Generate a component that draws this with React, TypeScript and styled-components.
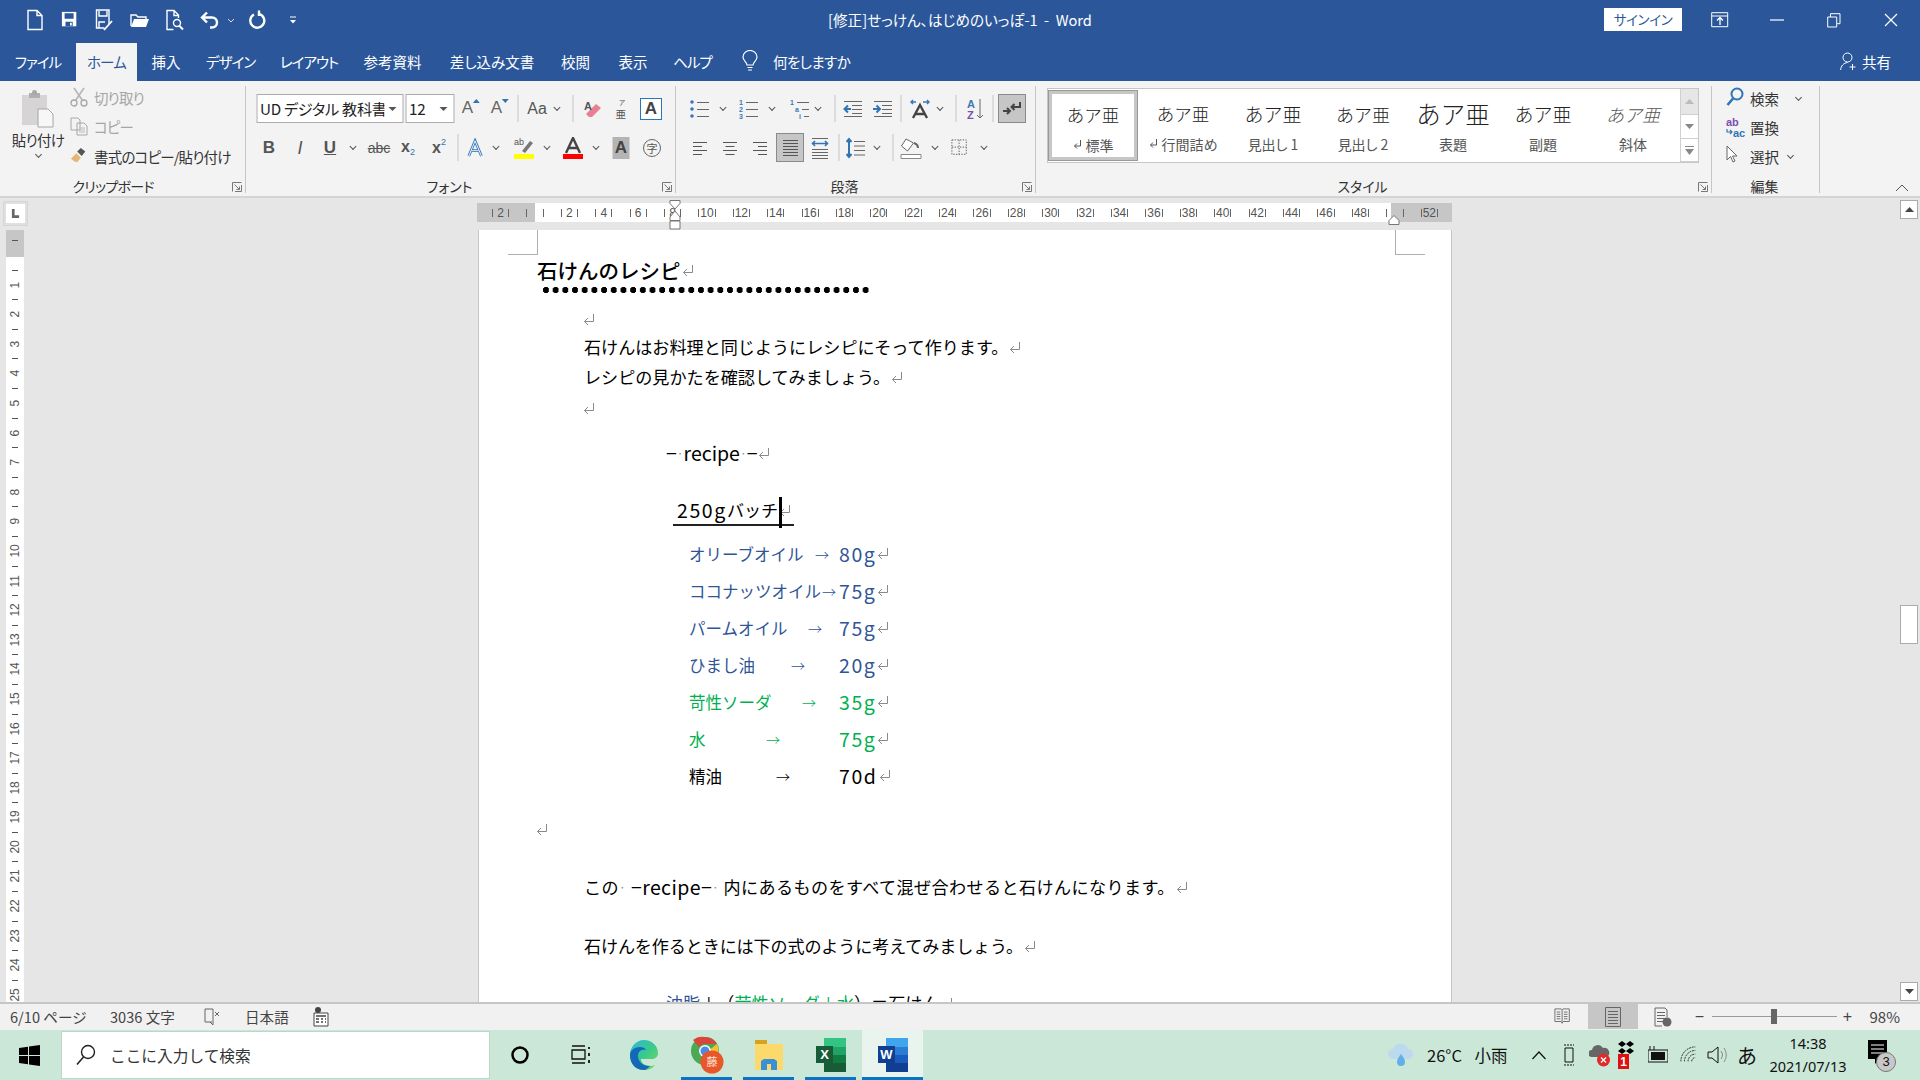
import React from "react";
import styled, { createGlobalStyle } from "styled-components";

const Global = createGlobalStyle`
  html, body { margin: 0; padding: 0; width: 1920px; height: 1080px; overflow: hidden; background: #e6e6e6; }
  * { box-sizing: border-box; }
  body { font-family: "Noto Sans CJK JP", "Noto Sans", sans-serif; color: #222; }
  svg { display: block; }
`;

const Shell = styled.div`width:1920px;height:1080px;display:flex;flex-direction:column;overflow:hidden;font-feature-settings:"palt";`;

/* slot rows: every command sits on a known centre line */
const SlotBox = styled.div<{ $left: number; $h?: number }>`
  display:flex;align-items:center;height:${p => p.$h ?? 29}px;padding-left:${p => p.$left}px;
`;
const Slot = styled.div<{ $w: number }>`
  flex:0 0 ${p => p.$w}px;width:${p => p.$w}px;display:flex;align-items:center;height:100%;white-space:nowrap;
  & > * { flex:none; transform:translateX(-50%); }
`;
type Item = [number, React.ReactNode];
const SlotRow = ({ origin, items, h }: { origin: number; items: Item[]; h?: number }) => (
  <SlotBox $left={items[0][0] - origin} $h={h}>
    {items.map(([c, n], i) => (
      <Slot key={i} $w={i + 1 < items.length ? items[i + 1][0] - c : 0}>{n}</Slot>
    ))}
  </SlotBox>
);

/* title bar */
const TitleBar = styled.header`height:40px;background:#2b579a;color:#fff;display:grid;grid-template-columns:1fr auto 1fr;align-items:center;`;
const TitleText = styled.div`font-size:14.6px;letter-spacing:0;white-space:pre;padding-bottom:2px;`;
const WinControls = styled.div`display:flex;justify-content:flex-end;align-items:center;height:100%;`;
const SignIn = styled.button`width:78px;height:23px;margin:0 38px 2px 0;border:0;background:#fff;color:#2b579a;font:inherit;font-size:13.5px;letter-spacing:-.4px;padding:0;`;

/* tabs */
const TabBar = styled.nav`height:41px;padding-top:3px;background:#2b579a;display:flex;color:#fff;font-size:14.5px;`;
const Tab = styled.div<{ $w: number; $on?: boolean; $ls?: number }>`
  flex:0 0 ${p => p.$w}px;display:flex;align-items:center;justify-content:center;white-space:nowrap;padding-bottom:2px;letter-spacing:${p => p.$ls ?? 0}px;
  background:${p => (p.$on ? "#f3f3f3" : "transparent")};color:${p => (p.$on ? "#2b579a" : "#fff")};
`;
const TellMe = styled.div`display:flex;align-items:center;margin-left:23px;gap:15px;padding-bottom:2px;letter-spacing:-.6px;`;
const Share = styled.div`margin-left:auto;padding-right:29px;display:flex;align-items:center;gap:5px;padding-bottom:2px;`;

/* ribbon */
const Ribbon = styled.section`height:117px;background:#f3f3f3;border-bottom:2px solid #d4d4d4;padding-top:5px;display:flex;align-items:flex-start;position:relative;`;
const Group = styled.div<{ $w: number }>`
  flex:0 0 ${p => p.$w}px;height:107px;border-right:1px solid #c6c6c6;display:flex;flex-direction:column;position:relative;
`;
const Rows = styled.div`padding-top:8px;display:flex;flex-direction:column;gap:10px;`;
const GroupLabel = styled.div<{ $pr?: number; $ls?: number }>`
  margin-top:auto;height:14px;line-height:14px;font-size:14px;text-align:center;color:#333;padding-right:${p => p.$pr ?? 22}px;letter-spacing:${p => p.$ls ?? 0}px;
`;
const LauncherMark = styled.div`position:absolute;right:3px;bottom:1px;`;
const Launcher = () => (
  <LauncherMark><svg width="10" height="10" viewBox="0 0 10 10"><path d="M.5 9.500V.5h9M2.500 2.500l5 5M4.500 7.500h3v-3M9.500 3v6.500H3" stroke="#777" fill="none" /></svg></LauncherMark>
);
const Sep = styled.span`width:1px;height:27px;background:#c6c6c6;`;
const Caret = styled.span`width:7px;height:4px;display:block;border-left:0;position:relative;
  &::before{content:"";position:absolute;left:1px;top:-2px;width:4px;height:4px;border-right:1px solid #555;border-bottom:1px solid #555;transform:rotate(45deg);}
`;
const FontBox = styled.div<{ $w: number }>`
  width:${p => p.$w}px;height:29px;background:#fff;border:1px solid #ababab;font-size:15.2px;letter-spacing:-.3px;line-height:27px;padding-left:3px;overflow:hidden;white-space:nowrap;position:relative;color:#222;
  &::after{content:"";position:absolute;right:6px;top:12px;border:4px solid transparent;border-top:4px solid #555;border-bottom:0;}
`;
const FontClip = styled.span`display:block;width:124px;overflow:hidden;`;
const Letter = styled.span<{ $s?: number; $c?: string; $b?: boolean; $i?: boolean; $u?: boolean; $strike?: boolean }>`
  font-family:"Liberation Sans",sans-serif;font-size:${p => p.$s ?? 16}px;color:${p => p.$c ?? "#555"};
  font-weight:${p => (p.$b ? 700 : 400)};font-style:${p => (p.$i ? "italic" : "normal")};
  text-decoration:${p => (p.$u ? "underline" : p.$strike ? "line-through" : "none")};line-height:1;
`;
const Sub = styled.sub`font-size:9px;color:#2f75b5;font-weight:400;vertical-align:-3px;`;
const Sup = styled.sup`font-size:9px;color:#2f75b5;font-weight:400;vertical-align:8px;line-height:0;`;
const Boxed = styled.span`display:block;width:22px;height:22px;border:1px solid #2f75b5;background:#fff;text-align:center;font:700 17px/20px "Liberation Sans",sans-serif;color:#444;`;
const Shaded = styled.span`display:block;width:17px;height:22px;background:#b4b4b4;text-align:center;font:700 17px/22px "Liberation Sans",sans-serif;color:#444;`;
const Ringed = styled.span`display:block;width:18px;height:18px;border:1px solid #666;border-radius:50%;text-align:center;font-size:11px;line-height:16px;color:#555;`;
const ToggleOn = styled.span`display:flex;width:28px;height:29px;align-items:center;justify-content:center;background:#c6c6c6;border:1px solid #8a8a8a;`;
const GrowRow = styled.span`display:flex;align-items:flex-start;gap:0;margin-top:-2px;`;

/* clipboard */
const ClipLayout = styled.div`display:flex;height:86px;`;
const PasteCol = styled.div`flex:0 0 76px;display:flex;flex-direction:column;align-items:center;padding-top:4px;font-size:14.5px;`;
const PasteText = styled.div`margin-top:2px;line-height:20px;color:#333;letter-spacing:-.7px;`;
const PasteCaret = styled.div`height:12px;display:flex;align-items:center;`;
const ClipStack = styled.div`display:flex;flex-direction:column;margin-top:-3px;margin-left:-6px;`;
const ClipRow = styled.div<{ $off?: boolean }>`
  height:28px;display:flex;align-items:center;gap:6px;font-size:14.5px;letter-spacing:-.8px;color:${p => (p.$off ? "#a6a6a6" : "#333")};white-space:nowrap;
  &:nth-child(2){margin-top:1px;}
  &:nth-child(3){margin-top:2px;}
`;
const ClipIcon = styled.span`flex:0 0 18px;display:flex;justify-content:center;`;

/* gallery */
const Gallery = styled.div`margin:2px 0 0 11px;width:652px;height:75px;border:1px solid #c6c6c6;background:#fff;display:flex;`;
const StyleItem = styled.div<{ $on?: boolean }>`
  flex:0 0 90px;height:${p => (p.$on ? "71px" : "73px")};margin-top:${p => (p.$on ? "1px" : "0")};border:${p => (p.$on ? "4px solid #c6c6c6" : "4px solid transparent")};${p => p.$on && "outline:1px solid #999;outline-offset:-1px;"}
  display:flex;flex-direction:column;align-items:center;background:#fff;
`;
const StyleSample = styled.div<{ $s: number; $i?: boolean; $c?: string }>`
  height:41px;line-height:42px;font-size:${p => p.$s}px;font-weight:300;white-space:nowrap;color:${p => p.$c ?? "#222"};font-style:${p => (p.$i ? "italic" : "normal")};font-feature-settings:normal;
`;
const StyleName = styled.div`font-size:14px;line-height:20px;color:#555;white-space:nowrap;display:flex;align-items:center;gap:4px;`;
const GalleryScroll = styled.div`margin-left:2px;flex:0 0 18px;display:flex;flex-direction:column;border-left:1px solid #d0d0d0;`;
const GalleryBtn = styled.div<{ $h: number; $off?: boolean }>`
  height:${p => p.$h}px;background:${p => (p.$off ? "#e6e6e6" : "#fff")};border-bottom:1px solid #d0d0d0;display:flex;align-items:center;justify-content:center;
`;
const EditStack = styled.div`padding:0 0 0 38px;display:flex;flex-direction:column;font-size:14.5px;color:#333;margin-top:-2px;`;
const EditRow = styled.div<{ $gap?: number }>`height:29px;display:flex;align-items:center;gap:${p => p.$gap ?? 8}px;white-space:nowrap;position:relative;`;
const EditIcon = styled.span`position:absolute;left:-24px;top:3px;`;
const Collapse = styled.div`position:absolute;right:11px;bottom:4px;`;

/* workspace */
const Workspace = styled.main`flex:1;min-height:0;display:flex;background:#e6e6e6;`;
const VCol = styled.aside`flex:0 0 52px;display:flex;flex-direction:column;padding-top:4px;`;
const TabStop = styled.div`width:23px;height:23px;margin-left:4px;background:#fff;border:2px solid #e0e0e0;outline:1px solid #d6d6d6;display:flex;align-items:center;justify-content:center;`;
const VRuler = styled.div`margin:5px 0 0 6px;width:18px;flex:1;min-height:0;overflow:hidden;background:#fff;display:flex;flex-direction:column;`;
const VGray = styled.div`flex:0 0 27px;background:#c6c6c6;display:flex;justify-content:center;padding-top:10px;`;
const VDash = styled.i`display:block;width:6px;height:1px;background:#555;`;
const VHead = styled.div`flex:0 0 13.6px;display:flex;align-items:flex-end;justify-content:center;`;
const VCell = styled.div`flex:0 0 29.6px;display:flex;flex-direction:column;align-items:center;`;
const VNum = styled.span`flex:1;writing-mode:vertical-rl;transform:rotate(180deg);font:12px/18px "Liberation Sans",sans-serif;color:#555;display:flex;align-items:center;justify-content:center;`;
const Center = styled.div`flex:1;min-width:0;display:flex;flex-direction:column;padding:5px 0 0 425px;`;
const HRuler = styled.div`flex:0 0 19px;width:975px;display:flex;position:relative;font:12px/1 "Liberation Sans",sans-serif;color:#555;`;
const HGrayL = styled.div`flex:0 0 58px;background:#c6c6c6;display:flex;align-items:center;padding-left:6.4px;`;
const HWhite = styled.div`flex:0 0 856px;background:#fff;display:flex;align-items:center;overflow:hidden;`;
const HGrayR = styled.div`flex:0 0 61px;background:#c6c6c6;display:flex;align-items:center;padding-left:4px;`;
const HUnit = styled.div`flex:0 0 34.4px;display:flex;justify-content:center;`;
const HNum = styled.div`flex:0 0 17.2px;width:17.2px;height:8px;border-left:1px solid #666;border-right:1px solid #666;display:flex;align-items:center;justify-content:center;overflow:visible;white-space:nowrap;`;
const HTick = styled.div`flex:0 0 17.2px;display:flex;justify-content:center;&::before{content:"";width:1px;height:8px;background:#666;}`;
const Indent = styled.div<{ $x: number; $y: number }>`position:absolute;left:${p => p.$x}px;top:${p => p.$y}px;`;
const PageArea = styled.div`flex:1;min-height:0;margin:8px 0 0 1px;width:974px;background:#fff;border-left:1px solid #c6c6c6;border-right:1px solid #c6c6c6;padding-left:58px;position:relative;overflow:hidden;`;
const CropMark = styled.div<{ $right?: boolean }>`
  position:absolute;top:0;${p => (p.$right ? "left:916px;border-left:1px solid #b0b0b0;" : "left:29px;border-right:1px solid #b0b0b0;")}width:30px;height:25px;border-bottom:1px solid #b0b0b0;
`;
const Heading = styled.div`margin-top:22px;height:36px;line-height:36px;font-size:20.5px;font-weight:500;color:#000;display:flex;align-items:center;white-space:pre;font-feature-settings:normal;`;
const Dots = styled.div`margin:-1px 0 12px 6px;width:329px;height:6px;background:radial-gradient(circle at 3px 3px,#000 2.9px,transparent 3.1px) 0 0/9.7px 6px repeat-x;`;
const Line = styled.div<{ $ml?: number; $mt?: number; $h?: number; $ls?: number }>`
  margin-left:${p => p.$ml ?? 47}px;margin-top:${p => p.$mt ?? 0}px;height:${p => p.$h ?? 30}px;line-height:${p => p.$h ?? 30}px;
  font-size:17.1px;color:#000;display:flex;align-items:center;white-space:pre;font-feature-settings:normal;letter-spacing:${p => p.$ls ?? 0}px;
`;
const Lat = styled.span`font-size:19.5px;`;
const Num = styled.span`font-size:19.5px;letter-spacing:1.6px;`;
const Dot = styled.span`color:#888;font-size:12px;`;
const BatchBox = styled.div`display:flex;align-items:center;width:121px;height:30px;padding-left:4px;border-bottom:2px solid #222;position:relative;`;
const Cursor = styled.span`position:absolute;left:106px;top:1px;width:3px;height:31px;background:#000;`;
const Ingredient = styled.div<{ $c: string; $mt?: number }>`
  margin:${p => p.$mt ?? 0}px 0 0 152px;height:37px;display:flex;align-items:center;font-size:16.5px;color:${p => p.$c};white-space:pre;font-feature-settings:normal;
`;
const IngName = styled.span<{ $w: number }>`flex:0 0 ${p => p.$w}px;min-width:0;`;
const IngArrow = styled.span<{ $w: number }>`flex:0 0 ${p => p.$w}px;min-width:0;font-size:14px;font-weight:300;`;
const Blue = styled.span`color:#2f5597;`;
const Green = styled.span`color:#00b050;`;
const Rm = styled.svg`flex:none;margin-left:1px;`;
const Ret = () => (
  <Rm width="12" height="13" viewBox="0 0 12 13"><path d="M10.500 1v7.500H1.500M5 5 1.500 8.500 5 12" fill="none" stroke="#8a8a8a" /></Rm>
);
const Scroll = styled.div`flex:0 0 20px;padding-top:2px;display:flex;flex-direction:column;`;
const ScrollBtn = styled.div`width:18px;height:19px;background:#fff;border:1px solid #ababab;display:flex;align-items:center;justify-content:center;`;
const Thumb = styled.div`width:18px;height:39px;margin-top:386px;background:#fff;border:1px solid #ababab;`;
const ScrollEnd = styled(ScrollBtn)`margin-top:auto;margin-bottom:1px;`;

/* status */
const Status = styled.footer`flex:0 0 27px;background:#f1f1f1;border-top:2px solid #c6c6c6;display:flex;align-items:center;font-size:14.6px;color:#444;font-feature-settings:normal;padding-bottom:1px;`;
const StatusCell = styled.div<{ $w: number; $pl?: number }>`flex:0 0 ${p => p.$w}px;padding-left:${p => p.$pl ?? 0}px;white-space:nowrap;display:flex;align-items:center;`;
const ViewBtn = styled.div<{ $on?: boolean }>`flex:0 0 50px;height:25px;background:${p => (p.$on ? "#c6c6c6" : "transparent")};display:flex;align-items:center;justify-content:center;`;
const Right = styled.div`margin-left:auto;display:flex;align-items:center;height:100%;`;
const Zoom = styled.div<{ $w: number }>`flex:0 0 ${p => p.$w}px;text-align:center;font:16px/1 "Liberation Sans",sans-serif;color:#444;`;
const Slider = styled.div`flex:0 0 125px;height:1px;background:#999;position:relative;`;
const SliderThumb = styled.div`position:absolute;left:59px;top:-7px;width:6px;height:15px;background:#666;`;
const Percent = styled.div`margin-left:11px;padding-right:20px;font-size:15px;`;

/* taskbar */
const Taskbar = styled.div`flex:0 0 50px;background:#cbe7d8;display:flex;align-items:stretch;color:#111;`;
const StartBtn = styled.div`flex:0 0 61px;display:flex;align-items:center;justify-content:center;padding-right:3px;`;
const Search = styled.div`flex:0 0 429px;margin:1px 0;background:#fff;border:1px solid #bcd7c8;display:flex;align-items:center;padding-left:14px;gap:14px;font-size:15.7px;color:#333;font-feature-settings:normal;`;
const TaskCell = styled.div<{ $w: number; $on?: boolean; $open?: boolean }>`
  flex:0 0 ${p => p.$w}px;display:flex;align-items:center;justify-content:center;position:relative;
  background:${p => (p.$on ? "#e9f4ee" : "transparent")};
  ${p => p.$open && `&::after{content:"";position:absolute;bottom:0;height:3px;background:#0a74c4;left:${p.$on ? 0 : 5}px;right:${p.$on ? 0 : 6}px;}`}
`;
const Tray = styled.div`flex:1;display:flex;align-items:center;`;
const TrayText = styled.span`font-size:16.5px;font-feature-settings:normal;color:#111;`;
const Ime = styled.span`font-size:20px;color:#111;font-feature-settings:normal;`;
const Clock = styled.div`display:flex;flex-direction:column;align-items:center;font:14.5px/23px "Noto Sans",sans-serif;color:#111;`;
const Notif = styled.div`position:relative;width:24px;height:30px;`;
const NotifBadge = styled.span`position:absolute;left:8px;top:12px;width:20px;height:20px;border-radius:50%;background:#c8c8c8;border:1px solid #777;font:13px/18px "Liberation Sans",sans-serif;text-align:center;color:#111;`;

/* ---- icons ---- */
const S = ({ w = 20, h = 20, vb = "0 0 20 20", children }: { w?: number; h?: number; vb?: string; children: React.ReactNode }) => (
  <svg width={w} height={h} viewBox={vb}>{children}</svg>
);
const qatP = { fill: "none", stroke: "#fff", strokeWidth: 1.4 };
const QNew = () => <S w={17} h={22} vb="0 0 17 22"><path {...qatP} d="M1.500 1.500h9l5 5v14h-14zM10.500 1.500v5h5" /></S>;
const QSave = () => <S w={18} h={18}><path fill="#fff" d="M1 1h16v16H1z" /><path fill="#2b579a" d="M4 2.500h10v6H4zM5 12h8v5H5z" /><path fill="#fff" d="M10 13h2v3h-2z" /></S>;
const QSaveAs = () => <S w={20} h={22} vb="0 0 20 22"><path {...qatP} d="M14 15V1H1.500v18h8M4 2v5h8V2M4 19v-6h6" /><path fill="none" stroke="#fff" strokeWidth="1.800" d="M9 21l8-9" /></S>;
const QOpen = () => <S w={20} h={16} vb="0 0 20 16"><path {...qatP} d="M1 14V3h5l2 2h8v2" /><path fill="#fff" d="M4 7h15l-3 8H1z" /></S>;
const QPrev = () => <S w={19} h={22} vb="0 0 19 22"><path {...qatP} d="M8 20.500H1.500v-19h7l4.500 4.500v3M8.500 1.500v5h4.500" /><circle cx="11.500" cy="14" r="3.500" {...qatP} /><path {...qatP} strokeWidth={2} d="M14 17l3.500 3.500" /></S>;
const QUndo = () => <S w={20} h={18} vb="0 0 20 18"><path fill="none" stroke="#fff" strokeWidth="2.400" d="M7 1.500 2 6.500l5 5M2 6.500h10a5 5 0 0 1 0 10h-2" /></S>;
const QRedo = () => <S w={18} h={20} vb="0 0 18 20"><path fill="none" stroke="#fff" strokeWidth="2.400" d="M5 4.500a7 7 0 1 0 5-.600M10 .5v5.500" /></S>;
const QChev = () => <S w={8} h={5} vb="0 0 8 5"><path d="M1 1l3 3 3-3" fill="none" stroke="#ddd" /></S>;
const QCustom = () => <S w={8} h={8} vb="0 0 8 8"><path d="M1 1h6" stroke="#fff" /><path d="M1 4h6L4 7.500z" fill="#fff" /></S>;
const WRibbon = () => <S w={18} h={16} vb="0 0 18 16"><path d="M.7.7h16v14H.7zM1 4h16" fill="none" stroke="#fff" /><path d="M9 13V6M6 8.500l3-3 3 3" fill="none" stroke="#fff" strokeWidth="1.300" /></S>;
const WMin = () => <S w={14} h={2} vb="0 0 14 2"><path d="M0 1h14" stroke="#fff" strokeWidth="1.200" /></S>;
const WRestore = () => <S w={14} h={15} vb="0 0 14 15"><path d="M.7 4h9v10h-9zM3.500 4V.7H13v10h-3" fill="none" stroke="#fff" /></S>;
const WClose = () => <S w={14} h={14} vb="0 0 14 14"><path d="M1 1l12 12M13 1 1 13" stroke="#fff" strokeWidth="1.200" /></S>;
const Bulb = () => <S w={16} h={22} vb="0 0 16 22"><path d="M5 15c0-3-4-4-4-8a7 6.500 0 0 1 14 0c0 4-4 5-4 8zM5.500 17.500h5M6 20h4" fill="none" stroke="#fff" strokeWidth="1.200" /></S>;
const Person = () => <S w={17} h={19} vb="0 0 17 19"><circle cx="7.500" cy="5.500" r="4.500" fill="none" stroke="#fff" /><path d="M.7 18c0-4 3-7 6.800-7.500M12.500 12v6M9.500 15h6" fill="none" stroke="#fff" /></S>;

const Paste = () => <S w={34} h={38} vb="0 0 34 38"><path fill="#d6d4d4" d="M1 5h25v30H1z" /><path fill="#b0aeae" d="M8 3h11v5H8z" /><circle cx="13.500" cy="2.500" r="2.500" fill="#a8a6a6" /><path fill="#f7f7f7" stroke="#a6a6a6" d="M17 19h10l5 5v13H17z" /></S>;
const Scissors = () => <S w={18} h={20} vb="0 0 18 20"><circle cx="4" cy="16" r="3" fill="none" stroke="#a6a6a6" strokeWidth="1.300" /><circle cx="14" cy="16" r="3" fill="none" stroke="#a6a6a6" strokeWidth="1.300" /><path d="M5.500 13.500 14 1M12.500 13.500 4 1" stroke="#b5b5b5" strokeWidth="1.600" /></S>;
const Copy = () => <S w={18} h={19} vb="0 0 18 19"><path d="M1 1h7l2 2v10H1zM7 6h7l3 3v9H7z" fill="#f3f3f3" stroke="#a6a6a6" /><path d="M9 11h6M9 13h6M9 15h6" stroke="#bbb" /></S>;
const Painter = () => <S w={18} h={18}><path fill="#e3b676" d="M1 13l6-6 5 5-4 5-3-1z" /><path fill="#555" d="M8 5l4-4 5 4-4 5z" /></S>;

const Lines = ({ x, y, w, n, gap, c = "#666" }: { x: number; y: number; w: number; n: number; gap: number; c?: string }) => (
  <path d={Array.from({ length: n }, (_, i) => `M${x} ${y + i * gap + 0.5}h${w}`).join("")} stroke={c} />
);
const Al = ({ mode }: { mode: "l" | "c" | "r" | "j" }) => {
  const ws = mode === "j" ? [16, 16, 16, 16, 16, 16] : [14, 9, 14, 9];
  const gap = mode === "j" ? 3 : 4;
  return <S w={16} h={18} vb="0 0 16 18">{ws.map((w, i) => { const x = mode === "l" || mode === "j" ? 1 : mode === "r" ? 15 - w : 8 - w / 2; return <path key={i} d={`M${x} ${1.500 + i * gap + (mode === "j" ? 0 : 2)}h${w}`} stroke="#555" />; })}</S>;
};
const Bullets = () => <S w={20} h={20}><circle cx="2" cy="3" r="1.800" fill="#3a78b8" /><circle cx="2" cy="10" r="1.800" fill="#3a78b8" /><circle cx="2" cy="17" r="1.800" fill="#3a78b8" /><Lines x={7} y={3} w={12} n={3} gap={7} /></S>;
const Numbers = () => <S w={20} h={20}><text x="0" y="6" fontSize="7" fontWeight="700" fill="#3a78b8" fontFamily="Liberation Sans">1</text><text x="0" y="13" fontSize="7" fontWeight="700" fill="#3a78b8" fontFamily="Liberation Sans">2</text><text x="0" y="20" fontSize="7" fontWeight="700" fill="#3a78b8" fontFamily="Liberation Sans">3</text><Lines x={7} y={3} w={12} n={3} gap={7} /></S>;
const Multi = () => <S w={20} h={20}><text x="0" y="6" fontSize="7" fontWeight="700" fill="#3a78b8" fontFamily="Liberation Sans">1</text><text x="5" y="13" fontSize="7" fontWeight="700" fill="#3a78b8" fontFamily="Liberation Sans">a</text><text x="9" y="20" fontSize="7" fontWeight="700" fill="#3a78b8" fontFamily="Liberation Sans">i</text><path d="M7 3.500h12M12 10.500h7M14 17.500h5" stroke="#666" /></S>;
const Outdent = () => <S w={20} h={18} vb="0 0 20 18"><Lines x={1} y={1} w={18} n={1} gap={0} /><Lines x={9} y={5} w={10} n={3} gap={4} /><Lines x={1} y={16} w={18} n={1} gap={0} /><path d="M8 9H2m3-3.500L1.500 9 5 12.500" stroke="#2f75b5" strokeWidth="2" fill="none" /></S>;
const Indents = () => <S w={20} h={18} vb="0 0 20 18"><Lines x={1} y={1} w={18} n={1} gap={0} /><Lines x={9} y={5} w={10} n={3} gap={4} /><Lines x={1} y={16} w={18} n={1} gap={0} /><path d="M0 9h6M3.500 5.500 7 9l-3.500 3.500" stroke="#2f75b5" strokeWidth="2" fill="none" /></S>;
const AsianA = () => <S w={20} h={20}><path d="M3 19 10 6l7 13M5.500 15h9" fill="none" stroke="#444" strokeWidth="2.400" /><path d="M1 3h5M3 1 1 3l2 2M19 3h-6M17 1l2 2-2 2" fill="none" stroke="#3a78b8" strokeWidth="1.500" /></S>;
const Sort = () => <S w={18} h={22} vb="0 0 18 22"><text x="0" y="10" fontSize="11" fontWeight="700" fill="#3a78b8" fontFamily="Liberation Sans">A</text><text x="0" y="21" fontSize="11" fontWeight="700" fill="#7a4fb0" fontFamily="Liberation Sans">Z</text><path d="M13 1v19M10 17l3 3 3-3" fill="none" stroke="#666" /></S>;
const Marks = () => <S w={20} h={16} vb="0 0 20 16"><path d="M18 1v5h-8m2.500-3L9.500 6l3 3" fill="none" stroke="#444" strokeWidth="2" /><path d="M1 10h7M5 7l3 3-3 3" fill="none" stroke="#444" strokeWidth="2" /></S>;
const Distr = () => <S w={18} h={22} vb="0 0 18 22"><Lines x={1} y={1} w={16} n={1} gap={0} /><Lines x={1} y={12} w={16} n={4} gap={3} /><path d="M1 6.500h16M4 4 1.500 6.500 4 9M14 4l2.500 2.500L14 9" fill="none" stroke="#2f75b5" strokeWidth="1.600" /></S>;
const Spacing = () => <S w={20} h={22} vb="0 0 20 22"><path d="M3 2v18M.5 5 3 2l2.500 3M.5 17 3 20l2.500-3" fill="none" stroke="#2f75b5" strokeWidth="2" /><Lines x={8} y={4} w={11} n={4} gap={4.500} /></S>;
const Fill = () => <S w={22} h={24} vb="0 0 22 24"><path d="M6 3 1.500 10l6 5 6-8z" fill="#fff" stroke="#666" /><path d="M14 7c3 1 4 3 4 5" fill="none" stroke="#666" strokeWidth="2" /><path d="M1 18.500h20v4H1z" fill="#fff" stroke="#888" /></S>;
const Border = () => <S w={18} h={18}><path d="M1 1h16v16H1zM9 1v16M1 9h16" fill="none" stroke="#555" strokeDasharray="1.500 1.500" /></S>;
const Eraser = () => <S w={20} h={20}><path d="M3 15 13 5l5 4-9 9H6z" fill="#e87f93" /><text x="1" y="11" fontSize="11" fontWeight="700" fill="#555" fontFamily="Liberation Sans">A</text></S>;
const Ruby = () => <S w={14} h={24} vb="0 0 14 24"><text x="5" y="8" fontSize="6.500" fill="#555" fontFamily="Noto Sans CJK JP">ア</text><text x="1.500" y="21" fontSize="10.500" fill="#555" fontFamily="Noto Sans CJK JP">亜</text></S>;
const TriUp = ({ c = "#777" }: { c?: string }) => <S w={7} h={4} vb="0 0 7 4"><path d="M3.500 0 7 4H0z" fill={c} /></S>;
const TriDown = ({ c = "#777" }: { c?: string }) => <S w={7} h={4} vb="0 0 7 4"><path d="M3.500 4 7 0H0z" fill={c} /></S>;
const EffectA = () => <S w={18} h={20}><path d="M2 19 9 2l7 17M5 13h8" fill="none" stroke="#3a78b8" strokeWidth="3" /><path d="M2 19 9 2l7 17M5 13h8" fill="none" stroke="#fff" strokeWidth="1" /></S>;
const Highlight = () => <S w={20} h={22} vb="0 0 20 22"><text x="0" y="8" fontSize="9" fill="#555" fontFamily="Liberation Sans">ab</text><path d="M8 14 16 4l3 2-8 10z" fill="#777" /><path d="M0 17h20v5H0z" fill="#ffff00" /></S>;
const ColorA = () => <S w={20} h={22} vb="0 0 20 22"><path d="M3 16 10 1l7 15M5.500 11h9" fill="none" stroke="#444" strokeWidth="2.400" /><path d="M0 17h20v5H0z" fill="#ff0000" /></S>;
const Mag = () => <S w={18} h={20} vb="0 0 18 20"><circle cx="11" cy="7" r="5.500" fill="none" stroke="#2f75b5" strokeWidth="2" /><path d="M7 11.500 1.500 18" stroke="#2f75b5" strokeWidth="2.600" /></S>;
const Replace = () => <S w={20} h={22} vb="0 0 20 22"><text x="0" y="10" fontSize="11" fontWeight="700" fill="#7a4fb0" fontFamily="Liberation Sans">ab</text><text x="7" y="21" fontSize="11" fontWeight="700" fill="#2f75b5" fontFamily="Liberation Sans">ac</text><path d="M1 13v3h5M4 14l2 2-2 2" fill="none" stroke="#2f75b5" strokeWidth="1.200" /></S>;
const Pointer = () => <S w={12} h={18} vb="0 0 12 18"><path d="M1 1v14l3.500-3.500 2.500 5.500 2-1-2.500-5H11z" fill="#fff" stroke="#666" /></S>;
const Up = () => <S w={14} h={8} vb="0 0 14 8"><path d="M1 7l6-6 6 6" fill="none" stroke="#555" /></S>;
const TabL = () => <S w={9} h={9} vb="0 0 10 10"><path d="M1 0h3v7h5v3H1z" fill="#666" /></S>;

const Hour = () => <S w={12} h={30} vb="0 0 12 30"><path d="M1 .5h10v3L6 9 1 3.500zM6 11l5 6v3.500H1V17zM1 21h10v8H1z" fill="#fff" stroke="#777" /></S>;
const RightInd = () => <S w={12} h={10} vb="0 0 12 10"><path d="M6 .5l5 5v4H1v-4z" fill="#fff" stroke="#777" /></S>;

const Book = () => <S w={18} h={18}><path d="M1 1h7l1 1 1-1h7v14h-7l-1 2-1-2H1zM9 2v13" fill="none" stroke="#666" /><Lines x={3} y={4} w={4} n={4} gap={2.500} /><Lines x={11} y={4} w={4} n={4} gap={2.500} /></S>;
const Doc = () => <S w={16} h={20} vb="0 0 16 20"><path d="M.5.5h15v19H.5z" fill="none" stroke="#666" /><Lines x={3} y={4} w={10} n={5} gap={3} /></S>;
const Web = () => <S w={18} h={20} vb="0 0 18 20"><path d="M1 1h10l2 2v7M8 19H1V1" fill="none" stroke="#666" /><Lines x={3} y={5} w={8} n={4} gap={3} /><circle cx="13" cy="15" r="4.500" fill="#666" /></S>;
const Proof = () => <S w={16} h={18} vb="0 0 16 18"><path d="M1 1h8M1 1v13h7M9 1v16l-3-3" fill="none" stroke="#666" /><path d="M11 4l4 4M15 4l-4 4" stroke="#666" /></S>;
const Macro = () => <S w={16} h={20} vb="0 0 16 20"><circle cx="5" cy="3" r="3" fill="#444" /><path d="M1 6h14v13H1z" fill="#fff" stroke="#444" /><path d="M3 9h10M3 12h3M8 12h2M12 12h1M3 15h3M8 15h2M12 15h1" stroke="#444" strokeWidth="1.500" /></S>;

const WinLogo = () => <S w={21} h={21} vb="0 0 21 21"><path fill="#000" d="M0 3l9-1.300V10H0zM10 1.500 21 0v10H10zM0 11h9v8.300L0 18zM10 11h11v10l-11-1.500z" /></S>;
const SearchGlass = () => <S w={20} h={22} vb="0 0 20 22"><circle cx="12" cy="8" r="6.500" fill="none" stroke="#222" strokeWidth="1.400" /><path d="M7.500 13 1 20.500" stroke="#222" strokeWidth="1.600" /></S>;
const Ring = () => <S w={20} h={20}><circle cx="10" cy="10" r="7.500" fill="none" stroke="#000" strokeWidth="2.500" /></S>;
const TaskView = () => <S w={20} h={22} vb="0 0 20 22"><path d="M1 6h13v9H1zM1 2h13M1 19h13" fill="none" stroke="#111" strokeWidth="1.300" /><path d="M18 3v2M18 9v3M18 16v3" stroke="#111" strokeWidth="1.800" /></S>;
const Edge = () => (
  <S w={30} h={32} vb="0 0 30 32">
    <defs><linearGradient id="edg" x1="0" y1="0" x2="1" y2="1"><stop offset="0" stopColor="#30b7d8" /><stop offset=".5" stopColor="#39c98f" /><stop offset="1" stopColor="#7ed957" /></linearGradient></defs>
    <path d="M15 1c8 0 14 6 14 13 0 4-3 6-6 6H12c0 4 4 7 9 7 2 0 4-.500 5-1-2 3-6 5-11 5C7 31 1 25 1 16 1 8 7 1 15 1z" fill="url(#edg)" />
    <path d="M1 16c0-5 5-8 10-8 3 0 5 1 6 3-3-1-8 0-8 6 0 5 4 10 12 10-2 2-4 4-6 4C7 31 1 25 1 16z" fill="#1568b8" />
  </S>
);
const Chrome = () => (
  <S w={34} h={38} vb="0 0 34 38">
    <circle cx="15" cy="15" r="14" fill="#4aa952" />
    <path d="M15 1a14 14 0 0 1 12 7H15a7 7 0 0 0-6 3L3 4a14 14 0 0 1 12-3z" fill="#d9453a" />
    <path d="M27 8a14 14 0 0 1-3 17l-6-10z" fill="#f3c133" />
    <circle cx="15" cy="15" r="6" fill="#fff" /><circle cx="15" cy="15" r="4.500" fill="#4a8be8" />
    <circle cx="22" cy="26" r="11.500" fill="#e8562a" />
    <text x="22" y="30" fontSize="11" fill="#ffe3d8" textAnchor="middle" fontFamily="Noto Sans CJK JP">藤</text>
  </S>
);
const Folder = () => <S w={28} h={32} vb="0 0 28 32"><path d="M0 1h12v6H0z" fill="#d9a21d" /><path d="M0 5h28v26H0z" fill="#fbd96b" /><path d="M9 20h10l3 2v9H6v-9z" fill="#3a8fd6" /><path d="M12 25h4v6h-4z" fill="#fbd96b" /></S>;
const Office = ({ a, b, c, d, l }: { a: string; b: string; c: string; d: string; l: string }) => (
  <S w={30} h={34} vb="0 0 30 34">
    <path d="M8 0h22v9H8z" fill={a} /><path d="M8 9h22v8H8z" fill={b} /><path d="M8 17h22v8H8z" fill={c} /><path d="M8 25h22v9H8z" fill={d} />
    <path d="M0 8h17v17H0z" fill={d} /><text x="8.500" y="21" fontSize="13" fontWeight="700" fill="#fff" textAnchor="middle" fontFamily="Liberation Sans">{l}</text>
  </S>
);
const Weather = () => <S w={28} h={30} vb="0 0 26 30"><path d="M5 19a5 5 0 0 1 0-10 8 8 0 0 1 15 0 5 5 0 0 1 0 10z" fill="#bcd9ee" /><path d="M13 14c3 4 4 6 4 8a4 4 0 0 1-8 0c0-2 1-4 4-8z" fill="#62b0e8" /></S>;
const Chevron = () => <S w={15} h={9} vb="0 0 15 9"><path d="M1 8l6.500-7L14 8" fill="none" stroke="#111" strokeWidth="1.200" /></S>;
const Meet = () => <S w={14} h={24} vb="0 0 14 24"><path d="M3 5h8v14H3z" fill="none" stroke="#111" /><path d="M2 2h10M2 22h10" stroke="#111" strokeDasharray="2 1" /></S>;
const CloudX = () => <S w={22} h={26} vb="0 0 22 26"><path d="M3 15a3.500 3.500 0 0 1 0-7 6 6 0 0 1 11-2 5 5 0 0 1 4 9z" fill="#666" /><circle cx="14.500" cy="18" r="6.500" fill="#e02b2b" /><path d="M12 15.500l5 5M17 15.500l-5 5" stroke="#fff" strokeWidth="1.300" /></S>;
const Dropbox = () => <S w={20} h={28} vb="0 0 20 28"><path d="M5 0l4 3-4 3-4-3zM13 0l4 3-4 3-4-3zM5 7l4 3-4 3-4-3zM13 7l4 3-4 3-4-3z" fill="#000" /><path d="M1 13h11v15H1z" fill="#e01010" /><text x="6.500" y="25" fontSize="12" fontWeight="700" fill="#fff" textAnchor="middle" fontFamily="Liberation Sans">1</text></S>;
const Battery = () => <S w={20} h={18} vb="0 0 20 18"><path d="M2 0v4M6 0v4" stroke="#111" /><path d="M0 4h20v12H0z" fill="none" stroke="#111" /><path d="M3 6h14v8H3z" fill="#111" /></S>;
const Wifi = () => <S w={18} h={18}><path d="M1 17A16 16 0 0 1 17 1M5 17A12 12 0 0 1 17 5M9 17a8 8 0 0 1 8-8M13 17a4 4 0 0 1 4-4" fill="none" stroke="#111" strokeDasharray="2 1" /></S>;
const Speaker = () => <S w={20} h={22} vb="0 0 20 22"><path d="M1 8h4l6-5v16l-6-5H1z" fill="none" stroke="#111" /><path d="M14 7c2 3 2 5 0 8M17 4c3 5 3 9 0 14" fill="none" stroke="#888" /></S>;
const NotifDoc = () => <S w={19} h={24} vb="0 0 19 24"><path d="M0 0h19v19h-8l-4 5v-5H0z" fill="#000" /><path d="M3 5h13M3 9h13M3 13h13" stroke="#fff" /></S>;
const SmallTri = ({ c = "#444" }: { c?: string }) => <S w={9} h={5} vb="0 0 9 5"><path d="M4.500 0 9 5H0z" fill={c} /></S>;
const SmallTriD = ({ c = "#444" }: { c?: string }) => <S w={9} h={5} vb="0 0 9 5"><path d="M4.500 5 9 0H0z" fill={c} /></S>;
const MoreTri = () => <S w={9} h={9} vb="0 0 9 9"><path d="M0 .5h9" stroke="#888" /><path d="M4.500 9 9 3H0z" fill="#888" /></S>;
const RetBlack = () => <S w={9} h={10} vb="0 0 9 10"><path d="M7.500 0v6H1.500M4 3.500 1.500 6 4 8.500" fill="none" stroke="#555" /></S>;

const hUnits = Array.from({ length: 24 }, (_, i) => (i + 1) * 2);
const vNums = Array.from({ length: 25 }, (_, i) => i + 1);

const ingredients: { n: string; arrow: number; amt: string; c: string }[] = [
  { n: "オリーブオイル", arrow: 126, amt: "80g", c: "#2f5597" },
  { n: "ココナッツオイル", arrow: 133, amt: "75g", c: "#2f5597" },
  { n: "パームオイル", arrow: 119, amt: "75g", c: "#2f5597" },
  { n: "ひまし油", arrow: 102, amt: "20g", c: "#2f5597" },
  { n: "苛性ソーダ", arrow: 113, amt: "35g", c: "#00b050" },
  { n: "水", arrow: 77, amt: "75g", c: "#00b050" },
  { n: "精油", arrow: 87, amt: "70d", c: "#000" },
];

const styleItems: { s: number; name: string; c?: string; i?: boolean; ret?: boolean }[] = [
  { s: 17.500, name: "標準", ret: true },
  { s: 17.500, name: "行間詰め", ret: true },
  { s: 19, name: "見出し 1" },
  { s: 18, name: "見出し 2" },
  { s: 24.500, name: "表題" },
  { s: 19, name: "副題" },
  { s: 18, name: "斜体", i: true, c: "#555" },
];

export default function App() {
  return (
    <Shell>
      <Global />
      <TitleBar>
        <SlotRow origin={0} h={40} items={[[35, <QNew />], [70, <QSave />], [105, <QSaveAs />], [140, <QOpen />], [175, <QPrev />], [210, <QUndo />], [231, <QChev />], [258, <QRedo />], [293, <QCustom />]]} />
        <TitleText>{"[修正]せっけん、はじめのいっぽ-1  -  Word"}</TitleText>
        <WinControls>
          <SignIn>サインイン</SignIn>
          <SlotRow origin={0} h={40} items={[[0, <WRibbon />], [57, <WMin />], [114, <WRestore />], [171, <WClose />], [200, <span />]]} />
        </WinControls>
      </TitleBar>

      <TabBar>
        <Tab $w={76} $ls={-1}>ファイル</Tab>
        <Tab $w={61} $on $ls={-.8}>ホーム</Tab>
        <Tab $w={58}>挿入</Tab>
        <Tab $w={71} $ls={-1}>デザイン</Tab>
        <Tab $w={86} $ls={-1}>レイアウト</Tab>
        <Tab $w={81}>参考資料</Tab>
        <Tab $w={118}>差し込み文書</Tab>
        <Tab $w={49}>校閲</Tab>
        <Tab $w={66}>表示</Tab>
        <Tab $w={53} $ls={-1}>ヘルプ</Tab>
        <TellMe><Bulb /><span>何をしますか</span></TellMe>
        <Share><Person /><span>共有</span></Share>
      </TabBar>

      <Ribbon>
        <Group $w={246}>
          <ClipLayout>
            <PasteCol>
              <Paste />
              <PasteText>貼り付け</PasteText>
              <PasteCaret><Caret /></PasteCaret>
            </PasteCol>
            <ClipStack>
              <ClipRow $off><ClipIcon><Scissors /></ClipIcon>切り取り</ClipRow>
              <ClipRow $off><ClipIcon><Copy /></ClipIcon>コピー</ClipRow>
              <ClipRow><ClipIcon><Painter /></ClipIcon>書式のコピー/貼り付け</ClipRow>
            </ClipStack>
          </ClipLayout>
          <GroupLabel $pr={19} $ls={-.7}>クリップボード</GroupLabel>
          <Launcher />
        </Group>

        <Group $w={430}>
          <Rows>
            <SlotRow origin={246} items={[
              [329.500, <FontBox $w={147}><FontClip>UD デジタル 教科書体</FontClip></FontBox>],
              [429.500, <FontBox $w={49}>12</FontBox>],
              [471, <GrowRow><Letter $s={17} $c="#666">A</Letter><TriUp c="#2f75b5" /></GrowRow>],
              [500, <GrowRow><Letter $s={17} $c="#666">A</Letter><TriDown c="#2f75b5" /></GrowRow>],
              [518, <Sep />],
              [537, <Letter $s={16}>Aa</Letter>],
              [557, <Caret />],
              [573, <Sep />],
              [593, <Eraser />],
              [621, <Ruby />],
              [651, <Boxed>A</Boxed>],
            ]} />
            <SlotRow origin={246} items={[
              [269, <Letter $b $s={17}>B</Letter>],
              [300, <Letter $i $s={18}>I</Letter>],
              [330, <Letter $u $b $s={17}>U</Letter>],
              [353, <Caret />],
              [379, <Letter $strike $s={14}>abc</Letter>],
              [408, <Letter $b $s={16}>x<Sub>2</Sub></Letter>],
              [439, <Letter $b $s={16}>x<Sup>2</Sup></Letter>],
              [458, <Sep />],
              [476, <EffectA />],
              [496, <Caret />],
              [524, <Highlight />],
              [547, <Caret />],
              [573, <ColorA />],
              [596, <Caret />],
              [621, <Shaded>A</Shaded>],
              [652, <Ringed>字</Ringed>],
            ]} />
          </Rows>
          <GroupLabel>フォント</GroupLabel>
          <Launcher />
        </Group>

        <Group $w={360}>
          <Rows>
            <SlotRow origin={676} items={[
              [700, <Bullets />], [723, <Caret />], [749, <Numbers />], [772, <Caret />], [800, <Multi />], [818, <Caret />],
              [835, <Sep />], [853, <Outdent />], [883, <Indents />], [901, <Sep />], [920, <AsianA />], [940, <Caret />],
              [956, <Sep />], [976, <Sort />], [993, <Sep />], [1012, <ToggleOn><Marks /></ToggleOn>],
            ]} />
            <SlotRow origin={676} items={[
              [700, <Al mode="l" />], [730, <Al mode="c" />], [760, <Al mode="r" />], [790, <ToggleOn><Al mode="j" /></ToggleOn>], [820, <Distr />],
              [839, <Sep />], [856, <Spacing />], [877, <Caret />], [893, <Sep />], [911, <Fill />], [935, <Caret />], [960, <Border />], [984, <Caret />],
            ]} />
          </Rows>
          <GroupLabel>段落</GroupLabel>
          <Launcher />
        </Group>

        <Group $w={676}>
          <Gallery>
            {styleItems.map((st, i) => (
              <StyleItem key={st.name} $on={i === 0}>
                <StyleSample $s={st.s} $i={st.i} $c={st.c}>あア亜</StyleSample>
                <StyleName>{st.ret && <RetBlack />}{st.name}</StyleName>
              </StyleItem>
            ))}
            <GalleryScroll>
              <GalleryBtn $h={26} $off><SmallTri c="#bbb" /></GalleryBtn>
              <GalleryBtn $h={24}><SmallTriD c="#888" /></GalleryBtn>
              <GalleryBtn $h={23}><MoreTri /></GalleryBtn>
            </GalleryScroll>
          </Gallery>
          <GroupLabel>スタイル</GroupLabel>
          <Launcher />
        </Group>

        <Group $w={108}>
          <EditStack>
            <EditRow $gap={16}><EditIcon><Mag /></EditIcon>検索<Caret /></EditRow>
            <EditRow><EditIcon><Replace /></EditIcon>置換</EditRow>
            <EditRow><EditIcon><Pointer /></EditIcon>選択<Caret /></EditRow>
          </EditStack>
          <GroupLabel $pr={2}>編集</GroupLabel>
        </Group>
        <Collapse><Up /></Collapse>
      </Ribbon>

      <Workspace>
        <VCol>
          <TabStop><TabL /></TabStop>
          <VRuler>
            <VGray><VDash /></VGray>
            <VHead><VDash /></VHead>
            {vNums.map(n => (
              <VCell key={n}><VNum>{n}</VNum><VDash /></VCell>
            ))}
          </VRuler>
        </VCol>

        <Center>
          <HRuler>
            <HGrayL>
              <HUnit><HNum>2</HNum></HUnit>
              <HTick />
            </HGrayL>
            <HWhite>
              <HTick />
              {hUnits.map(n => (
                <HUnit key={n}><HNum>{n}</HNum></HUnit>
              ))}
              <HTick />
            </HWhite>
            <HGrayR>
              <HTick />
              <HUnit><HNum>52</HNum></HUnit>
            </HGrayR>
            <Indent $x={192} $y={-3}><Hour /></Indent>
            <Indent $x={911} $y={12}><RightInd /></Indent>
          </HRuler>
          <PageArea>
            <CropMark />
            <CropMark $right />
            <Heading>石けんのレシピ<Ret /></Heading>
            <Dots />
            <Line $h={28} $ml={45}><Ret /></Line>
            <Line $h={28}>石けんはお料理と同じようにレシピにそって作ります。<Ret /></Line>
            <Line $mt={1}>レシピの見かたを確認してみましょう。<Ret /></Line>
            <Line $mt={1} $ml={45}><Ret /></Line>
            <Line $ml={129} $mt={15}><Lat>−</Lat><Dot>·</Dot><Lat>recipe</Lat><Dot>·</Dot><Lat>−</Lat><Ret /></Line>
            <Line $ml={136} $mt={28}>
              <BatchBox><Num>250g</Num>バッチ<Cursor /><Ret /></BatchBox>
            </Line>
            {ingredients.map((r, i) => (
              <Ingredient key={r.n} $c={r.c} $mt={i === 0 ? 9 : 0}>
                <IngName $w={r.arrow}>{r.n}</IngName>
                <IngArrow $w={150 - r.arrow}>→</IngArrow>
                <Num>{r.amt}</Num><Ret />
              </Ingredient>
            ))}
            <Line $ml={-2} $mt={20}><Ret /></Line>
            <Line $mt={28} $ls={0.4}>この<Dot>·</Dot><Lat> −recipe−</Lat><Dot>·</Dot> 内にあるものをすべて混ぜ合わせると石けんになります。<Ret /></Line>
            <Line $mt={29} $ls={-0.14}>石けんを作るときには下の式のように考えてみましょう。<Ret /></Line>
            <Line $ml={129} $mt={27}><Blue>油脂</Blue>{"\uFF0B\uFF08"}<Green>苛性ソーダ{"\uFF0B"}水</Green>{"\uFF09\uFF1D"}石けん<Ret /></Line>
          </PageArea>
        </Center>

        <Scroll>
          <ScrollBtn><SmallTri /></ScrollBtn>
          <Thumb />
          <ScrollEnd><SmallTriD /></ScrollEnd>
        </Scroll>
      </Workspace>

      <Status>
        <StatusCell $w={110} $pl={10}>6/10 ページ</StatusCell>
        <StatusCell $w={92}>3036 文字</StatusCell>
        <StatusCell $w={43} $pl={2}><Proof /></StatusCell>
        <StatusCell $w={66}>日本語</StatusCell>
        <StatusCell $w={30} $pl={2}><Macro /></StatusCell>
        <Right>
          <ViewBtn><Book /></ViewBtn>
          <ViewBtn $on><Doc /></ViewBtn>
          <ViewBtn><Web /></ViewBtn>
          <Zoom $w={24}>−</Zoom>
          <Slider><SliderThumb /></Slider>
          <Zoom $w={22}>+</Zoom>
          <Percent>98%</Percent>
        </Right>
      </Status>

      <Taskbar>
        <StartBtn><WinLogo /></StartBtn>
        <Search><SearchGlass />ここに入力して検索</Search>
        <TaskCell $w={60}><Ring /></TaskCell>
        <TaskCell $w={62}><TaskView /></TaskCell>
        <TaskCell $w={64}><Edge /></TaskCell>
        <TaskCell $w={62} $open><Chrome /></TaskCell>
        <TaskCell $w={62} $open><Folder /></TaskCell>
        <TaskCell $w={62} $open><Office a="#33c481" b="#21a366" c="#107c41" d="#185c37" l="X" /></TaskCell>
        <TaskCell $w={61} $on $open><Office a="#41a5ee" b="#2b7cd3" c="#185abd" d="#103f91" l="W" /></TaskCell>
        <Tray>
          <SlotRow origin={923} h={50} items={[
            [1401, <Weather />], [1444.500, <TrayText>26°C</TrayText>], [1491, <TrayText>小雨</TrayText>], [1539, <Chevron />],
            [1569, <Meet />], [1600, <CloudX />], [1627, <Dropbox />], [1658, <Battery />], [1689, <Wifi />], [1717, <Speaker />],
            [1747, <Ime>あ</Ime>], [1808, <Clock><span>14:38</span><span>2021/07/13</span></Clock>],
            [1880, <Notif><NotifDoc /><NotifBadge>3</NotifBadge></Notif>],
          ]} />
        </Tray>
      </Taskbar>
    </Shell>
  );
}
